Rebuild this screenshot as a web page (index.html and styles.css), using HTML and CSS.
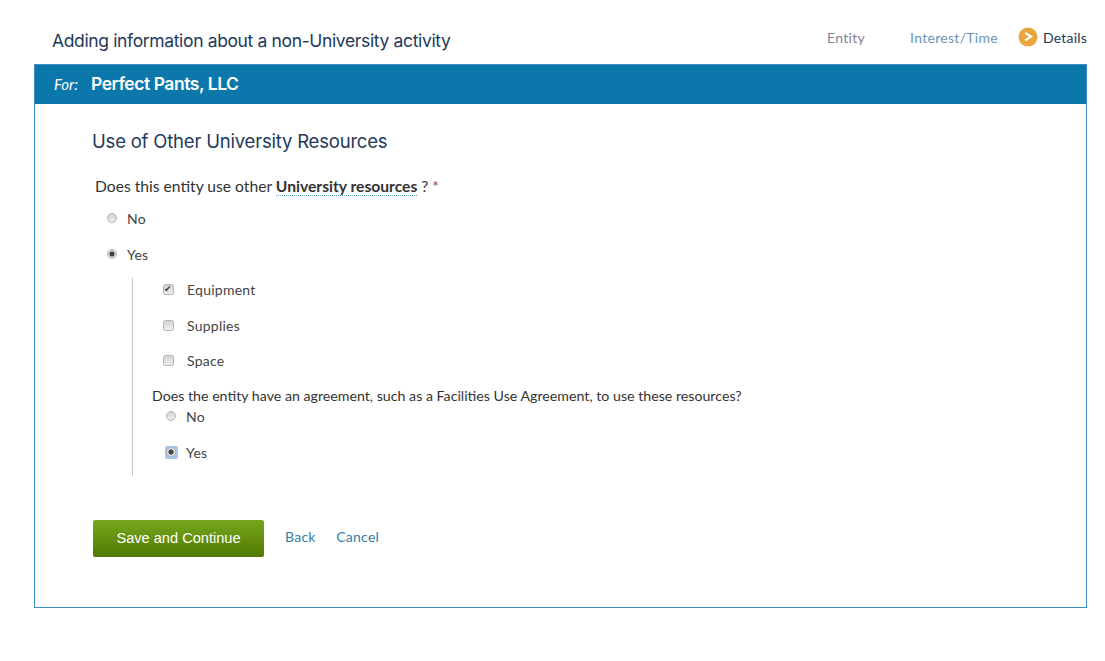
FILE: index.html
```html
<!DOCTYPE html>
<html lang="en">
<head>
<meta charset="utf-8">
<title>Adding information about a non-University activity</title>
<link rel="stylesheet" href="styles.css">
</head>
<body>
<div class="page">
  <header class="top">
    <h1 class="title">Adding information about a non-University activity</h1>
    <ol class="steps">
      <li class="step step-entity">Entity</li>
      <li class="step step-interest">Interest/Time</li>
      <li class="step step-current">
        <svg class="step-icon" width="20" height="20" viewBox="0 0 20 20" aria-hidden="true"><circle cx="10" cy="10" r="9.5" fill="#e9a53e"/><path d="M7.2 6 L13 9.6 L7.2 13.4" fill="none" stroke="#fff" stroke-width="2.2"/></svg>
        Details
      </li>
    </ol>
  </header>
  <main class="card">
    <div class="card-bar"><em class="for">For:</em><span class="entity">Perfect Pants, LLC</span></div>
    <div class="card-body">
      <h2 class="section">Use of Other University Resources</h2>
      <p class="question">Does this entity use other <abbr class="term">University resources</abbr> ? <span class="req">*</span></p>
      <label class="opt radio-opt"><input type="radio" name="a"><span>No</span></label>
      <label class="opt radio-opt"><input type="radio" name="a" checked><span>Yes</span></label>
      <div class="nested">
        <label class="opt check-opt"><input type="checkbox" checked><span>Equipment</span></label>
        <label class="opt check-opt"><input type="checkbox"><span>Supplies</span></label>
        <label class="opt check-opt"><input type="checkbox"><span>Space</span></label>
        <p class="subq">Does the entity have an agreement, such as a Facilities Use Agreement, to use these resources?</p>
        <label class="opt sub-radio"><input type="radio" name="b"><span>No</span></label>
        <label class="opt sub-radio"><span class="focus-ring"><input type="radio" name="b" checked></span><span>Yes</span></label>
      </div>
      <div class="actions">
        <button class="save" type="button">Save and Continue</button>
        <a class="link" href="#">Back</a>
        <a class="link" href="#">Cancel</a>
      </div>
    </div>
  </main>
</div>
</body>
</html>
```
FILE: styles.css
```css
* { box-sizing: border-box; }
html, body { margin: 0; padding: 0; background: #fff; }
body { font-family: Lato, "Liberation Sans", sans-serif; color: #333; font-size: 14px; }
.page { height: 661px; padding: 0 18px 0 34px; }
.top { height: 64px; display: flex; justify-content: space-between; }
.title { margin: 30px 0 0 18px; font: 400 17.5px/22px Inter, sans-serif; color: #23395b; letter-spacing: -0.36px; }
.steps { list-style: none; margin: 0; padding: 0; display: flex; align-items: flex-start; }
.step { font-size: 14px; line-height: 20px; margin-top: 28px; letter-spacing: 0.3px; }
.step-entity { color: #7f7f96; margin-right: 45px; }
.step-interest { color: #6b94b4; margin-right: 20px; }
.step-current { color: #23395b; display: flex; align-items: center; gap: 5px; letter-spacing: 0.2px; }
.step-icon { margin-top: -3px; }
.card { height: 544px; border: 1px solid #3b8fc4; }
.card-bar { height: 39px; background: #0c77aa; color: #fff; display: flex; align-items: center; padding: 0 0 1px 19px; }
.for { font-size: 15px; width: 37px; }
.entity { font: 600 17.5px/22px Inter, sans-serif; letter-spacing: -0.45px; }
.card-body { padding: 24px 0 0 58px; }
.section { margin: 0 0 0 -1px; font: 400 18.5px/26px Inter, sans-serif; color: #23395b; letter-spacing: -0.2px; }
.question { margin: 21px 0 0 2px; font-size: 15.65px; line-height: 22px; color: #333; }
.term { font-weight: 700; border-bottom: 1px dotted #5aa6c8; text-decoration: none; }
.req { color: #b03a3a; }
.opt { display: flex; align-items: center; color: #444; font-size: 14px; letter-spacing: 0.25px; }
.opt input { appearance: none; -webkit-appearance: none; margin: 0; flex: none; display: block; background: linear-gradient(#d4d4d4, #eeeeee); border: 1px solid #b2b2b2; }
input[type="radio"] { width: 10px; height: 10px; border-radius: 50%; }
input[type="radio"]:checked { background: radial-gradient(circle, #444 0 2.2px, #e0e0e0 3px); }
input[type="checkbox"] { width: 11px; height: 11px; border-radius: 2.5px; position: relative; }
input[type="checkbox"]:checked::after { content: "\2714"; position: absolute; left: 0; top: -3px; font: 9px/14px "DejaVu Sans", sans-serif; color: #333; }
.radio-opt { height: 36px; padding-left: 14px; gap: 10px; }
.question + .radio-opt { margin-top: 3px; }
.nested { margin: 6px 0 0 39px; padding: 0 0 0 31px; border-left: 1px solid #bccbd8; height: 198px; }
.check-opt { height: 23px; margin-bottom: 12.5px; gap: 13px; margin-left: -1px; }
.subq { margin: 0 0 0 -12px; font-size: 14.2px; line-height: 18px; color: #333; padding-top: 2.5px; height: 19.5px; white-space: nowrap; }
.sub-radio { height: 24px; padding-left: 2px; gap: 10px; margin-bottom: 12px; }
.focus-ring { display: block; padding: 1.5px; margin: -1.5px; background: #a9c5f2; border-radius: 2px; }
.actions { display: flex; align-items: center; margin-top: 44px; }
.save { width: 171px; height: 37px; border: 0; border-radius: 2px; background: linear-gradient(#76a61d, #527a00); color: #fff; font: 14.6px "Liberation Sans", sans-serif; padding: 0 0 2px; margin-right: 21px; }
.link { color: #2f7fa8; font-size: 14px; letter-spacing: 0.25px; text-decoration: none; margin: 0 20.5px 5px 0; }
```
